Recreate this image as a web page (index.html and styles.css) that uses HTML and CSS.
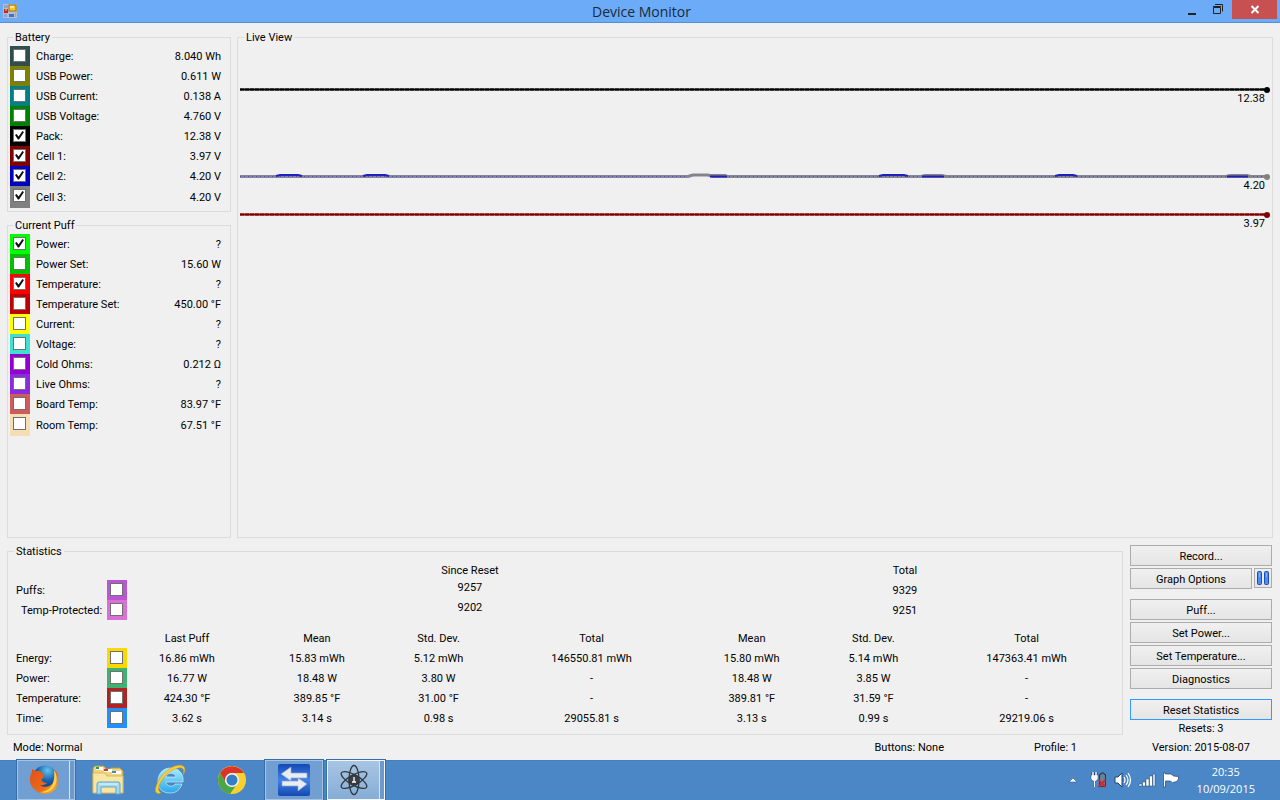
FILE: index.html
```html
<!DOCTYPE html>
<html lang="en">
<head>
<meta charset="utf-8">
<title>Device Monitor</title>
<link rel="stylesheet" href="styles.css">
</head>
<body>
<header class="titlebar">
  <svg class="app-icon" width="14" height="14" viewBox="0 0 14 14">
    <rect width="14" height="14" fill="#bdbdc4"/>
    <path d="M1 1h4v3H1zM1 10h3v3H1zM12 9h1v4h-1z" fill="#88a8d4"/>
    <rect x="6" y="1" width="7" height="6" fill="#f7c62c" stroke="#9b7414"/>
    <path d="M7 2h4v2H7z" fill="#ffe994"/>
    <rect x="1" y="5" width="4" height="4" fill="#c8221b"/>
    <rect x="2" y="5" width="2" height="2" fill="#ee786a"/>
    <rect x="6" y="9" width="5" height="4" fill="#3d72d2"/>
    <path d="M6 9h5v1H6z" fill="#9ec1f4"/>
  </svg>
  <h1>Device Monitor</h1>
  <div class="window-buttons">
    <button aria-label="Minimize"><svg width="10" height="14" viewBox="0 0 10 14"><path d="M1 10h8v2H1z" fill="#222"/></svg></button>
    <button aria-label="Restore"><svg width="12" height="12" viewBox="0 0 12 12" fill="none" stroke="#222"><path d="M1.500 3.500h7v6h-7zM1 2.500h8M3 .5h7.500v7"/></svg></button>
    <button class="close" aria-label="Close"><svg width="10" height="9" viewBox="0 0 10 9"><path d="M1.500 1l7 7M8.500 1l-7 7" stroke="#fff" stroke-width="2"/></svg></button>
  </div>
</header>
<main>
  <section class="upper">
    <div class="side">
      <fieldset class="group">
        <legend>Battery</legend>
        <div class="reading"><label class="sw charge"><input type="checkbox" aria-label="Charge"></label><span>Charge:</span><output>8.040 Wh</output></div>
        <div class="reading"><label class="sw olive"><input type="checkbox" aria-label="USB Power"></label><span>USB Power:</span><output>0.611 W</output></div>
        <div class="reading"><label class="sw teal"><input type="checkbox" aria-label="USB Current"></label><span>USB Current:</span><output>0.138 A</output></div>
        <div class="reading"><label class="sw green"><input type="checkbox" aria-label="USB Voltage"></label><span>USB Voltage:</span><output>4.760 V</output></div>
        <div class="reading"><label class="sw black"><input type="checkbox" checked aria-label="Pack"></label><span>Pack:</span><output>12.38 V</output></div>
        <div class="reading"><label class="sw maroon"><input type="checkbox" checked aria-label="Cell 1"></label><span>Cell 1:</span><output>3.97 V</output></div>
        <div class="reading"><label class="sw blue"><input type="checkbox" checked aria-label="Cell 2"></label><span>Cell 2:</span><output>4.20 V</output></div>
        <div class="reading last"><label class="sw gray"><input type="checkbox" checked aria-label="Cell 3"></label><span>Cell 3:</span><output>4.20 V</output></div>
      </fieldset>
      <fieldset class="group grow">
        <legend>Current Puff</legend>
        <div class="reading"><label class="sw lime"><input type="checkbox" checked aria-label="Power"></label><span>Power:</span><output>?</output></div>
        <div class="reading"><label class="sw midgreen"><input type="checkbox" aria-label="Power Set"></label><span>Power Set:</span><output>15.60 W</output></div>
        <div class="reading"><label class="sw red"><input type="checkbox" checked aria-label="Temperature"></label><span>Temperature:</span><output>?</output></div>
        <div class="reading"><label class="sw darkred"><input type="checkbox" aria-label="Temperature Set"></label><span>Temperature Set:</span><output>450.00 °F</output></div>
        <div class="reading"><label class="sw yellow"><input type="checkbox" aria-label="Current"></label><span>Current:</span><output>?</output></div>
        <div class="reading"><label class="sw turquoise"><input type="checkbox" aria-label="Voltage"></label><span>Voltage:</span><output>?</output></div>
        <div class="reading"><label class="sw violet"><input type="checkbox" aria-label="Cold Ohms"></label><span>Cold Ohms:</span><output>0.212 Ω</output></div>
        <div class="reading"><label class="sw blueviolet"><input type="checkbox" aria-label="Live Ohms"></label><span>Live Ohms:</span><output>?</output></div>
        <div class="reading"><label class="sw indianred"><input type="checkbox" aria-label="Board Temp"></label><span>Board Temp:</span><output>83.97 °F</output></div>
        <div class="reading last"><label class="sw wheat"><input type="checkbox" aria-label="Room Temp"></label><span>Room Temp:</span><output>67.51 °F</output></div>
      </fieldset>
    </div>
    <fieldset class="group live">
      <legend>Live View</legend>
      <div class="plot">
        <svg viewBox="0 0 1034 200" preserveAspectRatio="none" fill="none">
          <path d="M2 45.500H1029" stroke="#777" stroke-width="3"/>
          <path d="M2 45.500H1029" stroke="#000" stroke-width="2" stroke-dasharray="4 1"/>
          <path d="M2 45.500H1029" stroke="#000" stroke-width="1"/>
          <circle cx="1029" cy="46" r="3" fill="#000"/>
          <path d="M2 132.500H450L455 131H470L475 132.500H1029" stroke="#85859a" stroke-width="3"/>
          <path d="M2 132.500H450M475 132.500H1029" stroke="#5050b8" stroke-dasharray="1 3"/>
          <path d="M452 131H487L491 132.500M683 132L687 131H704L708 132M988 132L992 131H1009L1013 132" stroke="#858585" stroke-width="2"/>
          <path d="M38 132L42 131H60L64 132M125 132L129 131H147L151 132M641 132L645 131H666L670 132M817 132L821 131H835L839 132" stroke="#2020bb" stroke-width="2"/>
          <path d="M472 132.500H489M684 132.500H706M989 132.500H1010" stroke="#2020bb" stroke-width="2"/>
          <circle cx="1029" cy="133" r="3" fill="#808080"/>
          <path d="M2 170.500H1029" stroke="#bd7575" stroke-width="3"/>
          <path d="M2 170.500H1029" stroke="#800000" stroke-width="2" stroke-dasharray="4 1"/>
          <path d="M2 170.500H1029" stroke="#800000" stroke-width="1"/>
          <circle cx="1029" cy="171" r="3" fill="#800000"/>
        </svg>
        <span class="tag pack">12.38</span>
        <span class="tag cells">4.20</span>
        <span class="tag cell1">3.97</span>
      </div>
    </fieldset>
  </section>
  <section class="lower">
    <div class="lower-left">
      <fieldset class="group stats">
        <legend>Statistics</legend>
        <table>
          <colgroup><col class="c-label"><col class="c-sw"><col class="c-last"><col class="c-mean"><col class="c-dev"><col class="c-total"><col class="c-mean2"><col class="c-dev2"><col class="c-total2"></colgroup>
          <tr><td colspan="3"></td><th colspan="3">Since Reset</th><th colspan="3">Total</th></tr>
          <tr><th class="name">Puffs:</th><td class="sw-cell"><label class="sw orchid"><input type="checkbox" aria-label="Puffs"></label></td><td></td><td colspan="3" class="raised">9257</td><td colspan="3">9329</td></tr>
          <tr><th class="name indent">Temp-Protected:</th><td class="sw-cell"><label class="sw pink"><input type="checkbox" aria-label="Temp-Protected"></label></td><td></td><td colspan="3" class="raised">9202</td><td colspan="3">9251</td></tr>
          <tr class="heads"><td></td><td></td><th>Last Puff</th><th>Mean</th><th>Std. Dev.</th><th>Total</th><th>Mean</th><th>Std. Dev.</th><th>Total</th></tr>
          <tr><th class="name">Energy:</th><td class="sw-cell"><label class="sw gold"><input type="checkbox" aria-label="Energy"></label></td><td>16.86 mWh</td><td>15.83 mWh</td><td>5.12 mWh</td><td>146550.81 mWh</td><td>15.80 mWh</td><td>5.14 mWh</td><td>147363.41 mWh</td></tr>
          <tr><th class="name">Power:</th><td class="sw-cell"><label class="sw seagreen"><input type="checkbox" aria-label="Power"></label></td><td>16.77 W</td><td>18.48 W</td><td>3.80 W</td><td>-</td><td>18.48 W</td><td>3.85 W</td><td>-</td></tr>
          <tr><th class="name">Temperature:</th><td class="sw-cell"><label class="sw brick"><input type="checkbox" aria-label="Temperature"></label></td><td>424.30 °F</td><td>389.85 °F</td><td>31.00 °F</td><td>-</td><td>389.81 °F</td><td>31.59 °F</td><td>-</td></tr>
          <tr><th class="name">Time:</th><td class="sw-cell"><label class="sw dodger"><input type="checkbox" aria-label="Time"></label></td><td>3.62 s</td><td>3.14 s</td><td>0.98 s</td><td>29055.81 s</td><td>3.13 s</td><td>0.99 s</td><td>29219.06 s</td></tr>
        </table>
      </fieldset>
      <div class="status"><span>Mode: Normal</span><span class="buttons-state">Buttons: None</span><span class="profile">Profile: 1</span></div>
    </div>
    <aside class="actions">
      <div class="set">
        <button>Record...</button>
        <div class="split">
          <button>Graph Options</button>
          <button class="pause" aria-label="Pause"><svg width="12" height="14" viewBox="0 0 12 14" stroke="#1c4fb4"><rect x=".5" y=".5" width="4" height="13" rx="1" fill="#4e8cf0"/><rect x="7.500" y=".5" width="4" height="13" rx="1" fill="#4e8cf0"/><path d="M2.500 2v4M9.500 2v4" stroke="#86b4ff"/></svg></button>
        </div>
      </div>
      <div class="set">
        <button>Puff...</button>
        <button>Set Power...</button>
        <button>Set Temperature...</button>
        <button>Diagnostics</button>
      </div>
      <button class="focused">Reset Statistics</button>
      <p class="resets">Resets: 3</p>
      <p class="version">Version: 2015-08-07</p>
    </aside>
  </section>
</main>
<footer class="taskbar">
  <nav class="tasks">
    <button class="task open stacked" aria-label="Firefox"><svg width="30" height="30" viewBox="0 0 30 30">
      <defs><radialGradient id="globe" cx=".6" cy=".2" r=".8"><stop offset="0" stop-color="#61c5ee"/><stop offset=".5" stop-color="#1763b0"/><stop offset="1" stop-color="#10316f"/></radialGradient><linearGradient id="fox" x1="0" y1="0" x2="1" y2="1"><stop offset="0" stop-color="#e04f16"/><stop offset=".6" stop-color="#ea6a1a"/><stop offset="1" stop-color="#f9c529"/></linearGradient></defs>
      <circle cx="16" cy="13" r="12.500" fill="url(#globe)"/>
      <path d="M3 4c0 2 0 3-1 5-2 5-1 11 2 14 5 6 13 8 19 4 6-4 8-12 5-19-1-2-2-3-3-3 2 5 1 10-1 13-3 4-9 5-13 2 3 1 6-1 7-2-2 0-4-1-5-2-1-2 0-3 2-3-1-1-1-2 1-4-2 0-4-1-5-3-3 0-5 0-8-2z" fill="url(#fox)"/>
      <path d="M25 5c5 7 3 17-4 21-3 2-7 2-10 1 8 0 16-6 14-22z" fill="#fbd04a"/></svg></button>
    <button class="task" aria-label="File Explorer"><svg width="34" height="30" viewBox="0 0 34 30">
      <path d="M2 3l2-2h9l2 3h4l1-1h9l3 3v20H2z" fill="#efd37e" stroke="#b9943e"/>
      <path d="M5 2h7v3H5z" fill="#fff"/><path d="M5 2h3v2H5z" fill="#24a544"/><path d="M13 4h8v3h-8z" fill="#fff"/><path d="M13 4h4v2h-4z" fill="#d63a2a"/><path d="M21 6h9v3h-9z" fill="#fff"/><path d="M21 6h4v2h-4z" fill="#2a91db"/>
      <path d="M2 8h12l2 3h16v17H2z" fill="#f8e6a3" stroke="#dbb963"/>
      <path d="M6 29V19q0-2 2-2h19q2 0 2 2v10h-4v-7H10v7z" fill="#a5d9ef" stroke="#5ca9d0"/><path d="M8 19h19" stroke="#e6f9ff"/></svg></button>
    <button class="task" aria-label="Internet Explorer"><svg width="32" height="32" viewBox="0 0 32 32" fill="none">
      <defs><linearGradient id="ie" y2="1" x2="0"><stop stop-color="#a7ecff"/><stop offset="1" stop-color="#29a7e7"/></linearGradient></defs>
      <path fill-rule="evenodd" d="M29 18H12c0 4 7 6 9 2h7c-2 6-6 9-12 9C8 29 3 24 4 16 5 8 10 4 17 4c8 0 13 6 12 14zM12 13h10c-1-5-9-5-10 0z" fill="url(#ie)" stroke="#e3f6ff" stroke-width=".6"/>
      <path d="M7 29C0 31 0 25 5 16 12 4 24-1 29 2c3 2 2 6 0 9 1-3 1-6-1-7C23 3 14 7 8 16c-4 6-5 10-1 13z" fill="#f8cf38" stroke="#d49d16" stroke-width=".6"/></svg></button>
    <button class="task" aria-label="Chrome"><svg width="30" height="30" viewBox="0 0 30 30">
      <circle cx="15" cy="15" r="14" fill="#f8d12e"/>
      <path d="M3 8A14 14 0 0 1 27 8H15a7 7 0 0 0-6 10z" fill="#dc3429"/>
      <path d="M3 8a14 14 0 0 0 10 21l7-10a7 7 0 0 1-11-1z" fill="#4ba64a"/>
      <circle cx="15" cy="15" r="7" fill="#f4f4f4"/><circle cx="15" cy="15" r="5.500" fill="#347ec5"/></svg></button>
    <button class="task open" aria-label="Remote support"><svg width="32" height="32" viewBox="0 0 32 32">
      <defs><linearGradient id="tv" y2="1" x2="0"><stop stop-color="#1549b5"/><stop offset=".5" stop-color="#3f82ec"/><stop offset="1" stop-color="#1449b1"/></linearGradient></defs>
      <rect width="32" height="32" rx="2" fill="url(#tv)"/><path d="M3 10l10-7v6h16v5H13v3zM29 20l-9 7v-5H4v-5h16v-3z" fill="#e9edf3" stroke="#8fa3c4" stroke-width=".7"/></svg></button>
    <button class="task open active stacked" aria-label="Device Monitor"><svg width="32" height="32" viewBox="0 0 32 32" fill="none" stroke="#303840" stroke-width="1.300">
      <ellipse cx="16" cy="16" rx="5" ry="14.500"/><ellipse cx="16" cy="16" rx="5" ry="14.500" transform="rotate(60 16 16)"/><ellipse cx="16" cy="16" rx="5" ry="14.500" transform="rotate(120 16 16)"/><circle cx="16" cy="16" r="5" fill="#3b3f43"/><path d="M16 13v5M14 18h4" stroke="#fff"/></svg></button>
  </nav>
  <div class="tray">
    <svg width="10" height="6" viewBox="0 0 10 6"><path d="M1 5l4-4 4 4z" fill="#fff" stroke="#315986" stroke-width=".6"/></svg>
    <svg width="18" height="18" viewBox="0 0 18 18" fill="none"><path d="M9.500 3.500H11V2h3v1.500h1.500v12h-6z" fill="#6d8194" stroke="#263849"/><path d="M3 1v4M6 1v4M4.500 8v8" stroke="#23456d" stroke-width="3"/><path d="M1 4h7v4L6 10H3L1 8z" fill="#fff" stroke="#23456d" stroke-width=".5"/><path d="M3 1v4M6 1v4M4.500 9v7" stroke="#fff" stroke-width="1.500"/><path d="M8.500 9l7 7M15.500 9l-7 7" stroke="#d9222a" stroke-width="2"/></svg>
    <svg width="18" height="16" viewBox="0 0 18 16" fill="none"><path d="M1 5h3l4-4v14l-4-4H1z" fill="#fff" stroke="#23456d"/><path d="M10 5q2 3 0 6M12 3q4 5 0 10M14 1q5 7 0 14" stroke="#fff" stroke-width="1.200"/></svg>
    <svg width="18" height="14" viewBox="0 0 18 14"><path d="M1 11h3v2H1zM4.500 9h3v4h-3zM8 6h3v7H8zM11.500 3h3v10h-3zM15 1h2v12h-2z" fill="#fff" stroke="#23456d" stroke-width=".5"/></svg>
    <svg width="18" height="16" viewBox="0 0 18 16"><path d="M1.500 1v14h2V9h5l2 2c2-2 4 0 6-4V4c-2 1-3 0-5 0L9 2H3.500V1z" fill="#fff" stroke="#23456d" stroke-width=".7"/></svg>
  </div>
  <div class="clock"><span>20:35</span><span>10/09/2015</span></div>
</footer>
</body>
</html>
```
FILE: styles.css
```css
* { box-sizing: border-box; }
body {
  margin: 0;
  min-height: 100vh;
  display: flex;
  flex-direction: column;
  background: #f0f0f0;
  color: #000;
  font: 11px/14px Roboto, "Liberation Sans", sans-serif;
}
button { font: inherit; color: inherit; padding: 0; }
svg { display: block; flex: none; }

.titlebar {
  display: grid;
  grid-template-columns: 1fr auto 1fr;
  height: 23px;
  padding-left: 3px;
  background: #6babf7;
  border-bottom: 1px solid #5090d8;
}
.app-icon { margin-top: 4px; }
.titlebar h1 {
  margin: 0;
  font: 14px/24px "Open Sans", "Noto Sans", sans-serif;
  color: #1d2a38;
}
.window-buttons { display: flex; justify-content: flex-end; height: 19px; padding-right: 3px; }
.window-buttons button {
  width: 26px;
  border: 0;
  background: none;
  display: flex;
  align-items: center;
  justify-content: center;
}
.window-buttons .close { width: 45px; margin-left: 1px; background: #c75050; }

main {
  flex: 1;
  display: flex;
  flex-direction: column;
  gap: 6px;
  padding: 7px 7px 0;
}
.upper { flex: 1; display: grid; grid-template-columns: 224px 1fr; gap: 6px; }
.side { display: flex; flex-direction: column; gap: 6px; }

.group {
  margin: 0;
  min-width: 0;
  padding: 2px 9px 3px 2px;
  border: 1px solid #dcdcdc;
}
.group legend { padding: 0 2px; margin-left: 3px; height: 14px; line-height: 16px; }
.grow { flex: 1; }
.reading { display: flex; align-items: center; height: 20px; line-height: 16px; }
.reading span { flex: 1; margin-left: 6px; }
.reading span, .reading output { padding-top: 2px; }
.last { height: 22px; }

.sw { display: flex; width: 20px; height: 20px; padding: 3px; }
.last .sw { height: 22px; }
.sw input {
  appearance: none;
  width: 13px;
  height: 13px;
  margin: 0;
  border: 1px solid #707070;
  background: #fff;
}
.sw input:checked::after {
  content: "";
  display: block;
  width: 9px;
  height: 9px;
  margin: 1px;
  background: #111;
  clip-path: polygon(0 45%, 18% 32%, 40% 60%, 82% 0, 100% 12%, 45% 95%, 32% 95%);
}
.charge { background: #2f4f4f; }
.olive { background: #808000; }
.teal { background: #008080; }
.green { background: #008000; }
.black { background: #000; }
.maroon { background: #800000; }
.blue { background: #0000c0; }
.gray { background: #808080; }
.lime { background: #00ff00; }
.midgreen { background: #00c000; }
.red { background: #ff0000; }
.darkred { background: #c00000; }
.yellow { background: #ffff00; }
.turquoise { background: #40e0d0; }
.violet { background: #9400d3; }
.blueviolet { background: #8a2be2; }
.indianred { background: #cd5c5c; }
.wheat { background: #f5deb3; }
.orchid { background: #ba55d3; }
.pink { background: #da70d6; }
.gold { background: #ffd700; }
.seagreen { background: #3cb371; }
.brick { background: #b22222; }
.dodger { background: #1e90ff; }

.live { padding: 0; }
.live legend { margin-left: 6px; }
.plot { position: relative; }
.plot svg { width: 100%; height: 200px; }
.tag { position: absolute; right: 7px; }
.pack { top: 48px; }
.cells { top: 135px; }
.cell1 { top: 173px; }

.lower { display: grid; grid-template-columns: 1fr 142px; gap: 7px; padding-right: 1px; }
.stats { padding: 2px 5px 6px 8px; }
.stats legend { margin-left: -2px; }
.stats table { width: 100%; table-layout: fixed; border-collapse: collapse; }
.stats th, .stats td { height: 20px; padding: 2px 0 0; font-weight: normal; text-align: center; }
.stats .sw-cell { padding: 0; }
.stats .name { text-align: left; white-space: nowrap; }
.stats .indent { padding-left: 5px; }
.stats .raised { padding: 0 0 4px; }
.stats .heads th { height: 28px; padding-top: 10px; }
.c-label { width: 91px; }
.c-sw { width: 20px; }
.c-last { width: 10.9%; }
.c-mean { width: 12.7%; }
.c-dev { width: 9.4%; }
.c-total { width: 18.4%; }
.c-mean2 { width: 10.7%; }
.c-dev2 { width: 11.4%; }

.status { display: flex; align-items: center; height: 25px; padding: 0 46px 0 6px; }
.buttons-state { margin-left: auto; }
.profile { margin-left: 90px; }

.actions { display: flex; flex-direction: column; gap: 10px; padding-top: 1px; text-align: center; }
.set { display: flex; flex-direction: column; gap: 2px; }
.actions button {
  height: 21px;
  padding-top: 2px;
  border: 1px solid #acacac;
  background: linear-gradient(#f0f0f0, #e5e5e5);
}
.split { display: flex; gap: 2px; }
.split button { flex: 1; }
.actions .pause { flex: none; width: 18px; height: 20px; padding: 0; display: flex; align-items: center; justify-content: center; }
.actions .focused { border-color: #3399ff; }
.actions p { margin: 0; }
.actions .resets { margin-top: -8px; }
.actions .version { margin-top: -5px; }

.taskbar {
  display: flex;
  height: 40px;
  padding: 0 25px 0 17px;
  background: linear-gradient(#3e75b0 0, #4c87c7 1px, #4a87c6 100%);
  color: #fff;
}
.tasks { display: flex; gap: 4px; flex: 1; }
.task {
  position: relative;
  width: 58px;
  border: 0;
  background: none;
  display: flex;
  align-items: center;
  justify-content: center;
}
.open { border: 1px solid #a5c3e3; outline: 1px solid #386ea8; background: #719fd1; }
.active { border: 1px solid #f0f6fc; background: linear-gradient(#a8c5e3, #86add6); }
.stacked { padding-right: 5px; }
.stacked::after {
  content: "";
  position: absolute;
  top: 0;
  bottom: 0;
  right: 0;
  width: 4px;
  border-left: 1px solid #d5e4f3;
  background: #6d9acb;
}
.tray { display: flex; align-items: center; gap: 6px; }
.tray svg:first-child { margin-right: 6px; }
.clock {
  display: flex;
  flex-direction: column;
  align-items: center;
  justify-content: center;
  margin-left: 17px;
  font: 11px/17px "Open Sans", "Noto Sans", sans-serif;
}
```
